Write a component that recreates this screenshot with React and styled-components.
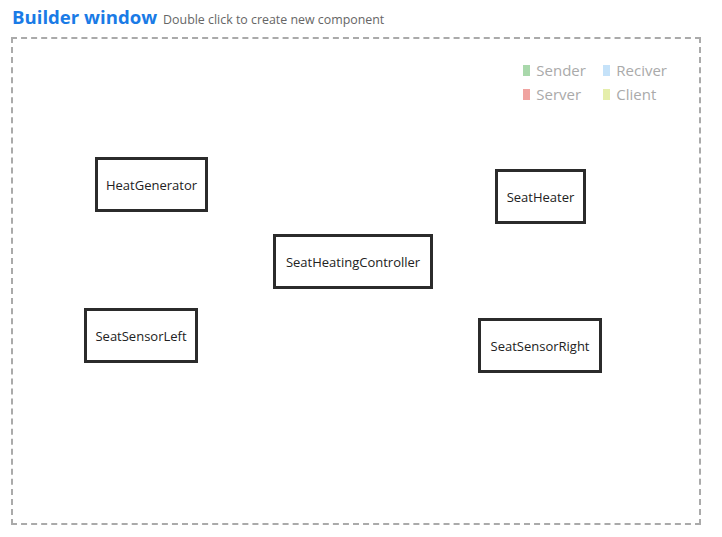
import React from "react"
import styled, { createGlobalStyle } from "styled-components"

const GlobalStyle = createGlobalStyle`
  body {
    margin: 0;
    background: #fff;
    font-family: "Segoe UI", "Open Sans", "Noto Sans", sans-serif;
  }
`

const Page = styled.div`
  padding: 4px 21px 11px 11px;
  display: flex;
  flex-direction: column;
`

const Header = styled.div`
  display: flex;
  align-items: baseline;
  gap: 6px;
  height: 33px;
  padding-left: 1px;
`

const Title = styled.h1`
  margin: 0;
  font-size: 18.6px;
  font-weight: 700;
  color: #1a7be6;
`

const Hint = styled.span`
  font-size: 12.4px;
  color: #666;
`

const Canvas = styled.div`
  position: relative;
  height: 488px;
  border: 2px dashed #aaa;
  box-sizing: border-box;
`

const Legend = styled.div`
  position: absolute;
  top: 21px;
  right: 32px;
  display: grid;
  grid-template-columns: 80px auto;
  row-gap: 3px;
`

const LegendItem = styled.div`
  display: flex;
  align-items: center;
  gap: 6px;
  font-size: 15px;
  color: #aaa;
  line-height: 21px;
`

const Swatch = styled.span`
  width: 7px;
  height: 11px;
  background: ${p => p.color};
`

const Node = styled.div`
  position: absolute;
  box-sizing: border-box;
  height: 55px;
  padding: 0 10px;
  display: flex;
  align-items: center;
  justify-content: center;
  border: 3px solid #2b2b2b;
  background: #fff;
  font-size: 13px;
  color: #222;
  white-space: nowrap;
`

const legend = [
  { label: "Sender", color: "#a9d8ab" },
  { label: "Reciver", color: "#c5e2f9" },
  { label: "Server", color: "#f0a3a0" },
  { label: "Client", color: "#e5eeab" },
]

const nodes = [
  { name: "HeatGenerator", x: 82, y: 118, w: 113 },
  { name: "SeatHeater", x: 482, y: 130, w: 91 },
  { name: "SeatHeatingController", x: 260, y: 195, w: 160 },
  { name: "SeatSensorLeft", x: 71, y: 269, w: 114 },
  { name: "SeatSensorRight", x: 465, y: 279, w: 124 },
]

export default function App() {
  return (
    <>
      <GlobalStyle />
      <Page>
        <Header>
          <Title>Builder window</Title>
          <Hint>Double click to create new component</Hint>
        </Header>
        <Canvas>
          <Legend>
            {legend.map(l => (
              <LegendItem key={l.label}>
                <Swatch color={l.color} />
                {l.label}
              </LegendItem>
            ))}
          </Legend>
          {nodes.map(n => (
            <Node key={n.name} style={{ left: n.x, top: n.y, width: n.w }}>
              {n.name}
            </Node>
          ))}
        </Canvas>
      </Page>
    </>
  )
}
